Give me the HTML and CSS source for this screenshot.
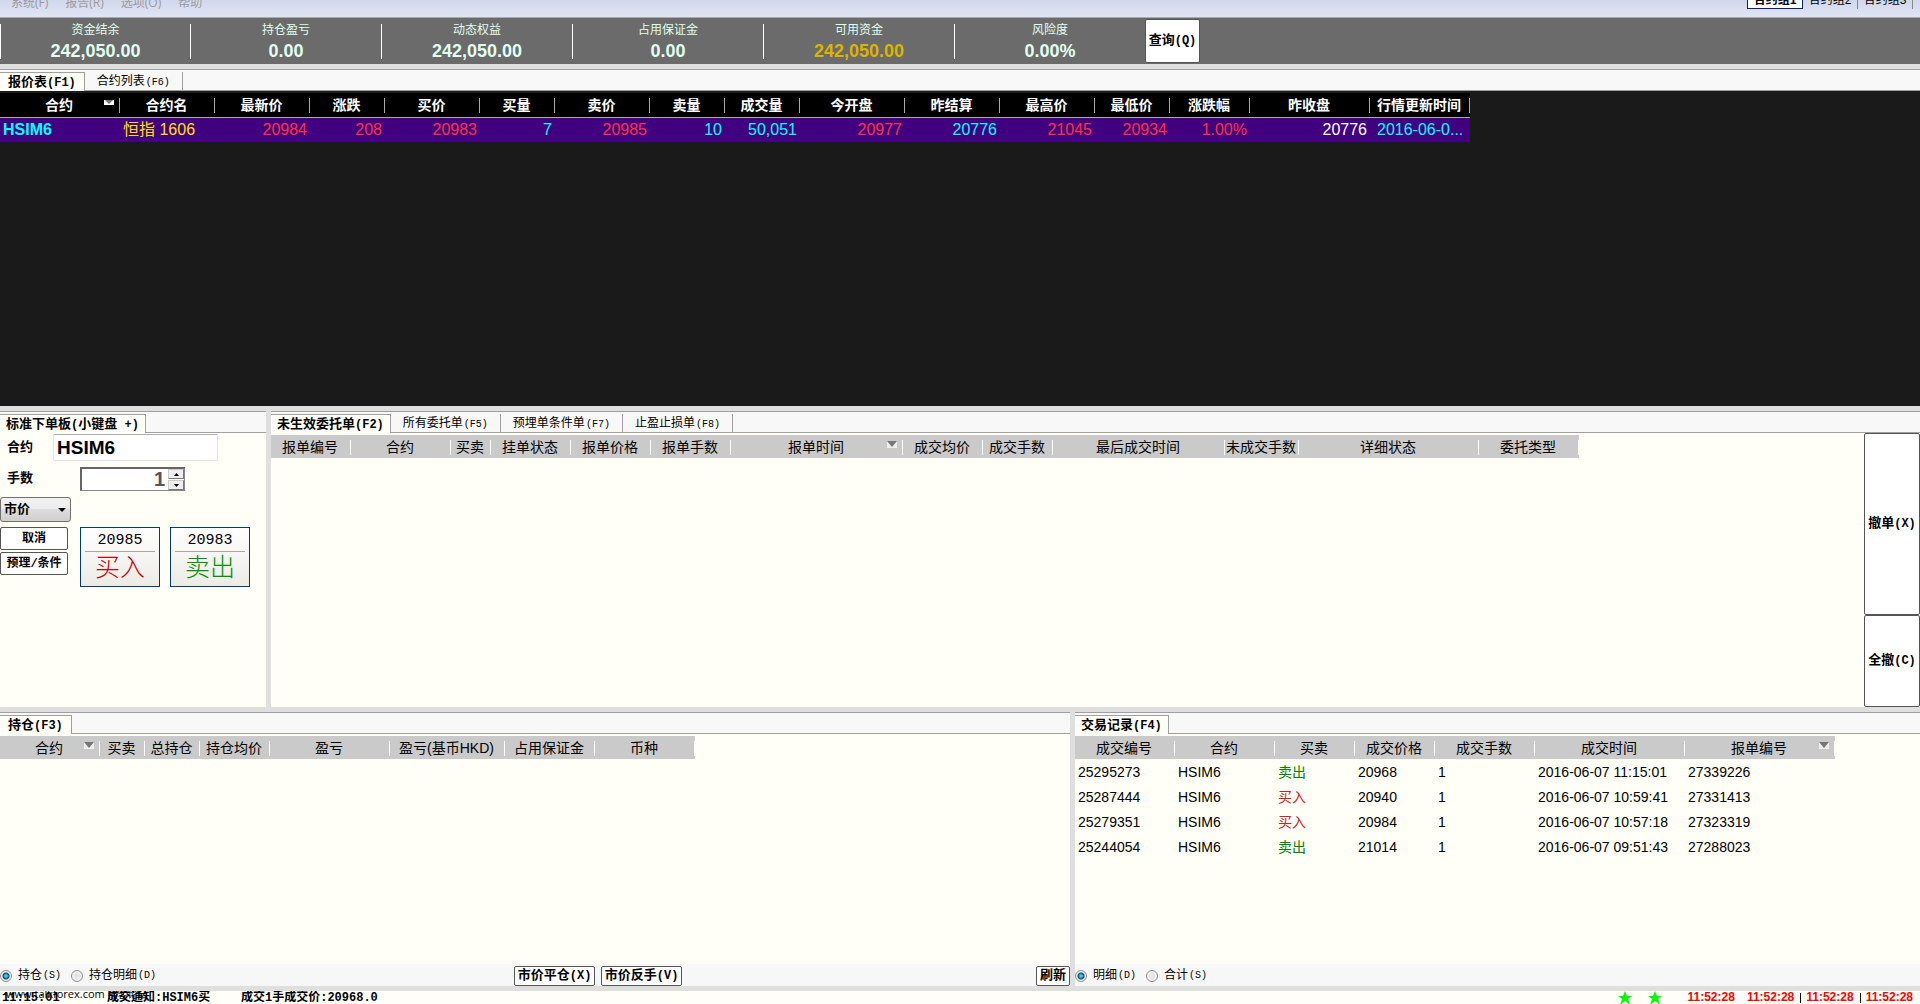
FILE: index.html
```html
<!DOCTYPE html>
<html lang="zh-CN">
<head>
<meta charset="utf-8">
<title>交易终端</title>
<link rel="stylesheet" href="styles.css">
</head>
<body>
<header class="menubar">
  <nav class="menu">
    <a href="#">系统(F)</a><a href="#">报告(R)</a><a href="#">选项(O)</a><a href="#">帮助</a>
  </nav>
  <div class="groups">
    <button class="group active">合约组1</button><button class="group">合约组2</button><button class="group">合约组3</button>
  </div>
</header>

<section class="summary">
  <div class="stat"><span>资金结余</span><b>242,050.00</b></div>
  <div class="stat"><span>持仓盈亏</span><b>0.00</b></div>
  <div class="stat"><span>动态权益</span><b>242,050.00</b></div>
  <div class="stat"><span>占用保证金</span><b>0.00</b></div>
  <div class="stat"><span>可用资金</span><b class="gold">242,050.00</b></div>
  <div class="stat"><span>风险度</span><b>0.00%</b></div>
  <button class="btn query">查询<span class="key">(Q)</span></button>
</section>

<main class="workspace">
  <section class="panel quotes">
    <div class="tabs wide"><button class="tab on">报价表<span class="key">(F1)</span></button><button class="tab">合约列表<span class="key">(F6)</span></button></div>
    <div class="quote-body">
      <table class="quote-table">
        <colgroup><col class="w120"><col class="w95"><col class="w95"><col class="w75"><col class="w95"><col class="w75"><col class="w95"><col class="w75"><col class="w75"><col class="w105"><col class="w95"><col class="w95"><col class="w75"><col class="w80"><col class="w120"><col class="w100"></colgroup>
        <thead><tr><th>合约<svg class="sort" viewBox="0 0 10 7"><rect y="1" width="10" height="5" fill="#fff"/><path d="M1 1h8L5 5z" fill="#777"/></svg></th><th>合约名</th><th>最新价</th><th>涨跌</th><th>买价</th><th>买量</th><th>卖价</th><th>卖量</th><th>成交量</th><th>今开盘</th><th>昨结算</th><th>最高价</th><th>最低价</th><th>涨跌幅</th><th>昨收盘</th><th>行情更新时间</th></tr></thead>
        <tbody><tr><td class="left cyan strong">HSIM6</td><td class="left yellow">恒指 1606</td><td>20984</td><td>208</td><td>20983</td><td class="cyan">7</td><td>20985</td><td class="cyan">10</td><td class="cyan">50,051</td><td>20977</td><td class="cyan">20776</td><td>21045</td><td>20934</td><td>1.00%</td><td class="white">20776</td><td class="left cyan updated">2016-06-0...</td></tr></tbody>
      </table>
    </div>
  </section>

  <div class="row middle">
    <section class="panel entry">
      <div class="tabs"><button class="tab on">标准下单板<span class="key">(</span>小键盘<span class="key"> +)</span></button></div>
      <form class="order">
        <div class="field first"><label for="sym">合约</label><input id="sym" class="symbol" value="HSIM6"></div>
        <div class="field second"><label for="qty">手数</label>
          <div class="spin"><input id="qty" inputmode="numeric" value="1">
            <div class="steps">
              <button type="button" aria-label="增加"><svg viewBox="0 0 5 3"><path d="M0 3h5L2.500 0z"/></svg></button>
              <button type="button" aria-label="减少"><svg viewBox="0 0 5 3"><path d="M0 0h5L2.500 3z"/></svg></button>
            </div>
          </div>
        </div>
        <div class="pricetype"><select aria-label="价格类型"><option>市价</option></select><svg viewBox="0 0 8 4"><path d="M0 0h8L4 4z"/></svg></div>
        <div class="actions">
          <div class="side"><button type="button" class="btn">取消</button><button type="button" class="btn">预理/条件</button></div>
          <button type="button" class="deal buy"><span>20985</span><b>买入</b></button>
          <button type="button" class="deal sell"><span>20983</span><b>卖出</b></button>
        </div>
      </form>
    </section>
    <section class="panel orders">
      <div class="tabs"><button class="tab on">未生效委托单<span class="key">(F2)</span></button><button class="tab">所有委托单<span class="key">(F5)</span></button><button class="tab">预埋单条件单<span class="key">(F7)</span></button><button class="tab">止盈止损单<span class="key">(F8)</span></button></div>
      <div class="orders-body">
        <div class="scroll">
          <table class="grid">
            <colgroup><col class="w80"><col class="w100"><col class="w40"><col class="w80"><col class="w80"><col class="w80"><col class="w172"><col class="w80"><col class="w70"><col class="w172"><col class="w74"><col class="w180"><col class="w100"></colgroup>
            <thead><tr><th>报单编号</th><th>合约</th><th>买卖</th><th>挂单状态</th><th>报单价格</th><th>报单手数</th><th>报单时间<svg class="sort" viewBox="0 0 10 7"><rect width="10" height="7" fill="#eee"/><path d="M0 0h10L5 6z" fill="#777"/></svg></th><th>成交均价</th><th>成交手数</th><th>最后成交时间</th><th>未成交手数</th><th>详细状态</th><th>委托类型</th></tr></thead>
          </table>
        </div>
        <div class="cancels"><button class="btn one">撤单<span class="key">(X)</span></button><button class="btn all">全撤<span class="key">(C)</span></button></div>
      </div>
    </section>
  </div>

  <div class="row bottom">
    <section class="panel positions">
      <div class="tabs wide"><button class="tab on">持仓<span class="key">(F3)</span></button></div>
      <div class="scroll">
        <table class="grid">
          <colgroup><col class="w100"><col class="w45"><col class="w55"><col class="w70"><col class="w120"><col class="w115"><col class="w90"><col class="w100"></colgroup>
          <thead><tr><th>合约<svg class="sort" viewBox="0 0 10 7"><rect width="10" height="7" fill="#eee"/><path d="M0 0h10L5 6z" fill="#777"/></svg></th><th>买卖</th><th>总持仓</th><th>持仓均价</th><th>盈亏</th><th>盈亏(基币HKD)</th><th>占用保证金</th><th>币种</th></tr></thead>
        </table>
      </div>
      <footer class="foot">
        <label><input type="radio" name="pos" checked>持仓<span class="key">(S)</span></label>
        <label><input type="radio" name="pos">持仓明细<span class="key">(D)</span></label>
        <div class="closers"><button class="btn">市价平仓<span class="key">(X)</span></button><button class="btn">市价反手<span class="key">(V)</span></button></div>
        <button class="btn refresh">刷新</button>
      </footer>
    </section>
    <section class="panel trades">
      <div class="tabs"><button class="tab on">交易记录<span class="key">(F4)</span></button></div>
      <div class="scroll">
        <table class="grid">
          <colgroup><col class="w100"><col class="w100"><col class="w80"><col class="w80"><col class="w100"><col class="w150"><col class="w150"></colgroup>
          <thead><tr><th>成交编号</th><th>合约</th><th>买卖</th><th>成交价格</th><th>成交手数</th><th>成交时间</th><th>报单编号<svg class="sort" viewBox="0 0 10 7"><rect width="10" height="7" fill="#eee"/><path d="M0 0h10L5 6z" fill="#777"/></svg></th></tr></thead>
          <tbody>
            <tr><td>25295273</td><td>HSIM6</td><td class="green">卖出</td><td>20968</td><td>1</td><td>2016-06-07 11:15:01</td><td>27339226</td></tr>
            <tr><td>25287444</td><td>HSIM6</td><td class="red">买入</td><td>20940</td><td>1</td><td>2016-06-07 10:59:41</td><td>27331413</td></tr>
            <tr><td>25279351</td><td>HSIM6</td><td class="red">买入</td><td>20984</td><td>1</td><td>2016-06-07 10:57:18</td><td>27323319</td></tr>
            <tr><td>25244054</td><td>HSIM6</td><td class="green">卖出</td><td>21014</td><td>1</td><td>2016-06-07 09:51:43</td><td>27288023</td></tr>
          </tbody>
        </table>
      </div>
      <footer class="foot">
        <label><input type="radio" name="trd" checked>明细<span class="key">(D)</span></label>
        <label><input type="radio" name="trd">合计<span class="key">(S)</span></label>
      </footer>
    </section>
  </div>
</main>

<footer class="status">
  <span class="clock">11:15:01</span><span class="notice">成交通知:HSIM6买</span><span>成交1手成交价:20968.0</span>
  <div class="times">
    <svg class="star" viewBox="0 0 14 14"><path d="M7 0l2 5h5l-4 3 2 6-5-4-5 4 2-6-4-3h5z"/></svg>
    <svg class="star" viewBox="0 0 14 14"><path d="M7 0l2 5h5l-4 3 2 6-5-4-5 4 2-6-4-3h5z"/></svg>
    <time class="lead">11:52:28</time><time>11:52:28</time><i></i><time>11:52:28</time><i></i><time>11:52:28</time>
  </div>
  <div class="watermark">www.talkforex.com <span>播客论坛</span></div>
</footer>
</body>
</html>
```
FILE: styles.css
```css
* { box-sizing: border-box; }
html, body { height: 100%; }
body {
  margin: 0;
  display: flex;
  flex-direction: column;
  overflow: hidden;
  background: #fffff7;
  color: #000;
  font: 12px/16px "Liberation Mono", "Noto Sans CJK SC", monospace;
}
button, input, select { font: inherit; color: inherit; margin: 0; padding: 0; }
button { white-space: nowrap; cursor: pointer; }
.key { font-size: 10px; margin-left: 1px; white-space: pre; }
.btn .key, .on .key { font-size: 12px; margin-left: 0; }

/* menu bar */
.menubar {
  flex: none;
  height: 18px;
  overflow: hidden;
  display: flex;
  justify-content: space-between;
  background: linear-gradient(#d2d8ec, #e0e5f5);
  border-bottom: 1px solid #a8a8b0;
  font-family: "Open Sans", "Noto Sans CJK SC", sans-serif;
}
.menu { display: flex; gap: 17px; padding-left: 11px; margin-top: -5px; }
.menu a { color: #999; text-decoration: none; }
.groups { display: flex; margin-top: -10px; padding-right: 7px; height: 19px; font-family: "Liberation Sans", "Noto Sans CJK SC", sans-serif; }
.group { height: 19px; width: 55px; border: 0; border-right: 1px solid #888; background: none; }
.group.active { width: 56px; border: 1px solid #0a246a; background: #fff; font-weight: bold; }

/* account summary */
.summary { flex: none; height: 46px; display: flex; align-items: center; background: #6b6b6b; }
.stat {
  width: 191px;
  height: 35px;
  padding-top: 1px;
  display: flex;
  flex-direction: column;
  align-items: center;
  border-left: 1px solid #fff;
  color: #e0fff0;
}
.stat:first-child { width: 190px; }
.stat span { line-height: 13px; }
.stat b { padding-top: 4px; font: bold 18px/18px "Liberation Sans", sans-serif; }
.stat .gold { color: #dcb400; }
.btn { background: #fff; border: 1px solid #555; border-radius: 2px; font-size: 13px; font-weight: bold; }
.query { width: 55px; height: 44px; }

/* docked panels */
.workspace { flex: 1; min-height: 0; display: flex; flex-direction: column; gap: 5px; padding: 5px 0; background: #dfdfdf; }
.quotes { flex: 337 1 0; }
.row { display: flex; gap: 5px; min-height: 0; }
.middle { flex: 296 1 0; }
.bottom { flex: 274 1 0; }
.panel { display: flex; flex-direction: column; min-width: 0; min-height: 0; background: #fffff7; }
.tabs { flex: none; height: 22px; display: flex; align-items: flex-end; padding-top: 3px; background: #f8f8f8; border-top: 1px solid #a0a0a0; border-bottom: 1px solid #a0a0a0; }
.tab { height: 18px; padding: 2px 12px 0; border: 0; border-right: 1px solid #a0a0a0; background: none; }
.tab.on { height: 19px; margin-bottom: -1px; padding: 1px 6px 0; border-top: 1px solid #a0a0a0; background: #fffff7; font-size: 13px; font-weight: bold; }
.wide .tab.on { padding: 1px 8px 0; }

table { border-collapse: collapse; table-layout: fixed; width: 0; }
.w40 { width: 40px; } .w45 { width: 45px; } .w55 { width: 55px; } .w70 { width: 70px; }
.w74 { width: 74px; } .w75 { width: 75px; } .w80 { width: 80px; } .w90 { width: 90px; }
.w95 { width: 95px; } .w100 { width: 100px; } .w105 { width: 105px; } .w115 { width: 115px; }
.w120 { width: 120px; } .w150 { width: 150px; } .w172 { width: 172px; } .w180 { width: 180px; }
th, td { padding: 0; white-space: nowrap; overflow: hidden; }
th { position: relative; }
.sort { position: absolute; right: 6px; top: 6px; width: 10px; height: 7px; }

.quote-body { flex: 1; background: #1a1a1a; padding-top: 2px; }
.quote-table { font: 16px/24px "Liberation Sans", "Noto Sans CJK SC", sans-serif; }
.quote-table th {
  height: 24px;
  padding: 2px 2px 0 0;
  color: #fff;
  font-size: 14px;
  line-height: 21px;
  background: linear-gradient(#aaa, #aaa) right 5px / 1px 15px no-repeat #000;
  background-position: right 5px;
  border-bottom: 1px solid #aaa;
}
.quote-table td { height: 25px; padding-right: 3px; text-align: right; background: #400080; color: #ff3040; }
.quote-table .left { text-align: left; padding-left: 3px; }
.quote-table .updated { padding: 0 0 0 7px; }
.quote-table .cyan { color: #00ffff; }
.quote-table .yellow { color: #ffe000; }
.quote-table .white { color: #fff; }
.strong { font-weight: bold; }

.grid { font: 14px/23px "Liberation Sans", "Noto Sans CJK SC", sans-serif; }
.grid th {
  height: 23px;
  padding: 2px 2px 0 0;
  line-height: 21px;
  font-weight: normal;
  background: linear-gradient(#fff, #fff) right 5px / 1px 15px no-repeat #cacaca;
  background-position: right 5px;
}
.grid td { height: 25px; padding: 2px 0 0 3px; }
.green { color: #008000; }
.red { color: #d02020; }
.scroll { flex: 1; min-width: 0; padding-top: 2px; overflow: hidden; }

/* order entry */
.entry { flex: none; width: 266px; }
.order { display: flex; flex-direction: column; align-items: flex-start; }
.field { display: flex; align-items: center; font-size: 13px; font-weight: bold; }
.field label { padding-left: 7px; }
.first { padding-top: 1px; gap: 20px; }
.second { padding: 6px 0; gap: 47px; }
.symbol { width: 165px; height: 27px; padding: 1px 0 0 3px; border: 1px solid #e2e3ee; border-top-color: #abadb3; border-radius: 2px; background: #fff; font: bold 19px/24px "Liberation Sans", sans-serif; }
.spin { width: 105px; height: 24px; display: flex; background: #fff; border: 1px solid #888; border-top: 2px solid #666; border-left: 2px solid #666; }
.spin input { flex: 1; min-width: 0; padding-right: 3px; border: 0; background: none; text-align: right; color: #555; font: bold 20px/20px "Liberation Sans", sans-serif; }
.steps { width: 16px; display: flex; flex-direction: column; gap: 1px; }
.steps button { flex: 1; display: flex; align-items: center; justify-content: center; background: #eee; border: 1px solid #ccc; border-right-color: #777; border-bottom-color: #777; }
.steps svg { width: 5px; height: 3px; }
.pricetype { display: grid; width: 71px; height: 25px; align-items: center; }
.pricetype select, .pricetype svg { grid-area: 1 / 1; }
.pricetype select { appearance: none; height: 25px; padding-left: 3px; border: 1px solid #707070; border-radius: 3px; background: linear-gradient(#f2f2f2, #ebebeb 50%, #dddddd 50%, #cfcfcf); font-size: 13px; font-weight: bold; }
.pricetype svg { justify-self: end; width: 8px; height: 4px; margin-right: 5px; pointer-events: none; }
.actions { display: flex; gap: 10px; padding-top: 5px; }
.side { width: 70px; display: flex; flex-direction: column; align-items: flex-start; gap: 2px; }
.side .btn { width: 68px; height: 23px; font-size: 12px; }
.deal { width: 80px; height: 60px; display: flex; flex-direction: column; align-items: center; padding: 0 4px; border: 1px solid #003c74; background: linear-gradient(#fff, #ecebe6); }
.deal span { flex: none; width: 100%; height: 24px; border-bottom: 1px solid #aca899; font-size: 15px; line-height: 26px; }
.deal b { font-size: 25px; line-height: 36px; font-weight: 300; }
.buy b { color: #c80000; }
.sell b { color: #009000; }

/* pending orders */
.orders { flex: 1; }
.orders-body { flex: 1; display: flex; min-height: 0; }
.cancels { flex: none; width: 56px; display: flex; flex-direction: column; }
.one { flex: 2; }
.all { flex: 1; }

/* positions and trades */
.positions { flex: 1070 1 0; }
.trades { flex: 845 1 0; }
.foot { flex: none; height: 22px; padding-top: 2px; display: flex; align-items: center; gap: 10px; background: #f7f7f7; }
.foot label { display: flex; align-items: center; }
.foot input { appearance: none; width: 12px; height: 12px; margin-right: 6px; border: 1px solid #8e8f8f; border-radius: 50%; background: radial-gradient(#ddd, #fff); }
.foot input:checked { background: radial-gradient(#4cc8f0 0 1px, #0b4a78 3px, #eee 4px); }
.foot .btn { height: 20px; }
.closers { display: flex; gap: 6px; margin-left: 348px; }
.closers .btn { width: 81px; }
.refresh { width: 34px; margin-left: auto; }

/* status line */
.status { flex: none; height: 13px; position: relative; display: flex; overflow: hidden; padding-left: 2px; font-weight: bold; line-height: 15px; }
.clock { width: 105px; }
.notice { width: 134px; }
.times { margin-left: auto; padding-right: 7px; display: flex; align-items: center; color: #f00; font-family: "Liberation Sans", sans-serif; }
.star { width: 14px; height: 14px; margin-right: 16px; fill: #0f0; }
.lead { margin: 0 12px 0 10px; }
.times i { width: 1px; height: 10px; margin: 0 5px 0 6px; background: #000; }
.watermark { position: absolute; left: 6px; top: -5px; font: 11px/16px "Open Sans", "Noto Sans CJK SC", sans-serif; }
.watermark span { font-size: 10px; }
```
